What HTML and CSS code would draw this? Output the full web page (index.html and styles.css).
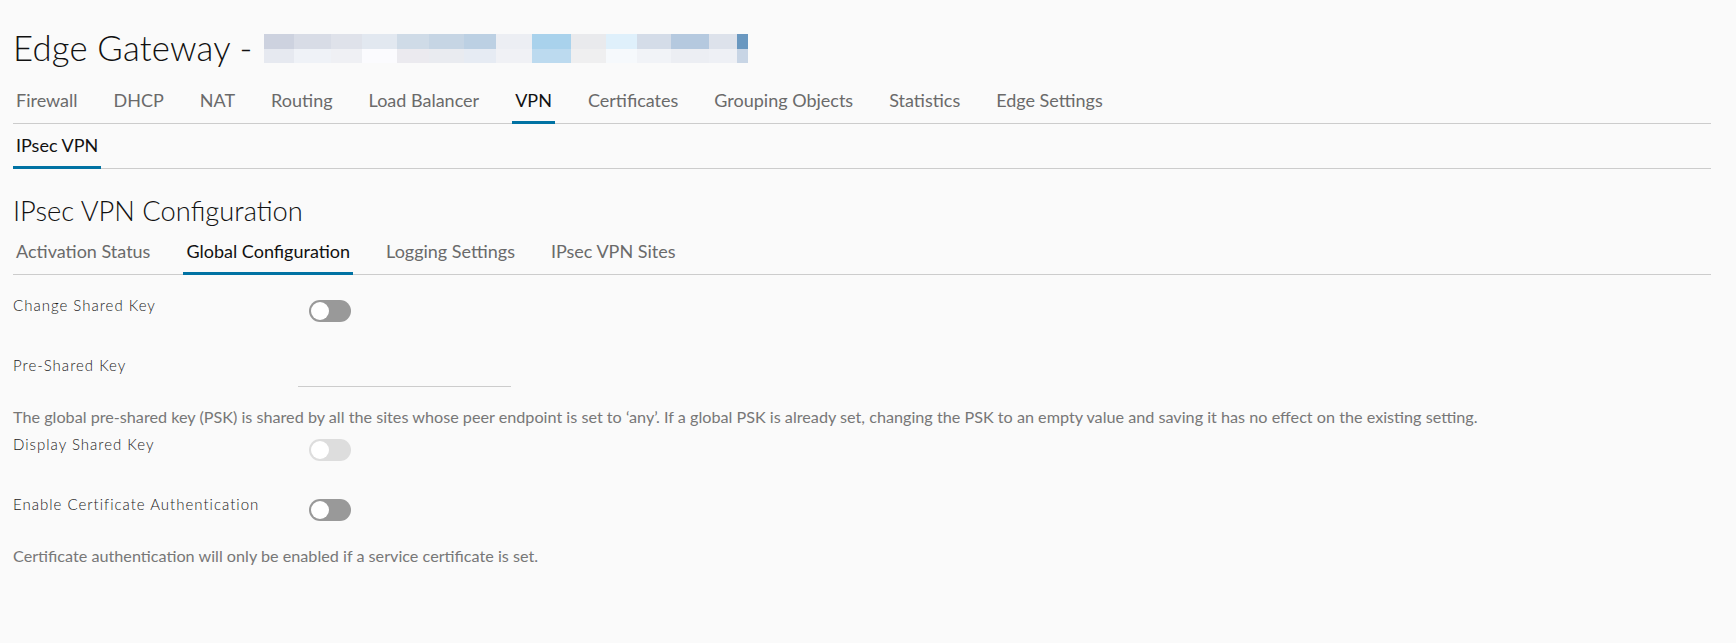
FILE: index.html
```html
<!DOCTYPE html>
<html lang="en">
<head>
<meta charset="utf-8">
<title>Edge Gateway</title>
<link rel="stylesheet" href="styles.css">
</head>
<body>
<div class="page">
  <div class="title-row">
    <h1 class="title">Edge Gateway -</h1>
    <div class="redacted">
      <div class="redacted-top"></div>
      <div class="redacted-bottom"></div>
    </div>
  </div>

  <nav class="tabs tabs-main">
    <a class="tab">Firewall</a>
    <a class="tab">DHCP</a>
    <a class="tab">NAT</a>
    <a class="tab">Routing</a>
    <a class="tab">Load Balancer</a>
    <a class="tab active">VPN</a>
    <a class="tab">Certificates</a>
    <a class="tab">Grouping Objects</a>
    <a class="tab">Statistics</a>
    <a class="tab">Edge Settings</a>
  </nav>

  <nav class="tabs tabs-sub">
    <a class="tab active">IPsec VPN</a>
  </nav>

  <h2 class="section-title">IPsec VPN Configuration</h2>

  <nav class="tabs tabs-config">
    <a class="tab">Activation Status</a>
    <a class="tab active">Global Configuration</a>
    <a class="tab">Logging Settings</a>
    <a class="tab">IPsec VPN Sites</a>
  </nav>

  <form class="form">
    <div class="form-row row-change">
      <label class="form-label">Change Shared Key</label>
      <div class="form-control"><span class="toggle"></span></div>
    </div>
    <div class="form-row row-psk">
      <label class="form-label">Pre-Shared Key</label>
      <div class="form-control"><span class="text-input"></span></div>
    </div>
    <p class="help help-psk">The global pre-shared key (PSK) is shared by all the sites whose peer endpoint is set to ‘any’. If a global PSK is already set, changing the PSK to an empty value and saving it has no effect on the existing setting.</p>
    <div class="form-row row-display">
      <label class="form-label">Display Shared Key</label>
      <div class="form-control"><span class="toggle disabled"></span></div>
    </div>
    <div class="form-row row-cert">
      <label class="form-label">Enable Certificate Authentication</label>
      <div class="form-control"><span class="toggle"></span></div>
    </div>
    <p class="help help-cert">Certificate authentication will only be enabled if a service certificate is set.</p>
  </form>
</div>
</body>
</html>
```

FILE: styles.css
```css
* { box-sizing: border-box; }

html, body {
  margin: 0;
  padding: 0;
  background: #fafafa;
}

body {
  font-family: "Lato", "Liberation Sans", sans-serif;
  color: #313131;
}

.page {
  padding: 28px 25px 0 13px;
}

.title-row {
  display: flex;
  align-items: center;
  height: 40px;
}

.title {
  margin: 0;
  font-size: 34.7px;
  font-weight: 300;
  color: #111111;
  line-height: 40px;
  letter-spacing: 0.2px;
}

.redacted {
  margin-left: 11px;
  width: 484px;
  display: flex;
  flex-direction: column;
}

.redacted-top {
  height: 15px;
  background: linear-gradient(to right,
    #cdd2df 0 30px, #d8dce6 30px 67px, #dfe2ea 67px 98px, #e2e8f0 98px 133px,
    #cfdbe7 133px 165px, #c6d5e4 165px 200px, #bcd0e3 200px 232px, #eceef3 232px 268px,
    #a9d2ec 268px 307px, #e9eaed 307px 342px, #dff0fb 342px 373px, #d4dce8 373px 407px,
    #b5c9df 407px 445px, #dde2eb 445px 473px, #6a98c0 473px 484px);
}

.redacted-bottom {
  height: 14px;
  background: linear-gradient(to right,
    #e6e9f0 0 30px, #eff2f7 30px 67px, #eff0f4 67px 98px, #fbfbfe 98px 133px,
    #ebeaef 133px 165px, #e9ebf0 165px 200px, #e6ebf3 200px 232px, #f0f1f5 232px 268px,
    #bcdaef 268px 307px, #efeff0 307px 342px, #f6f9fc 342px 373px, #f1f3f7 373px 407px,
    #eceef3 407px 445px, #eef0f5 445px 473px, #c8d5e5 473px 484px);
}

.tabs {
  display: flex;
  gap: 30px;
  border-bottom: 1px solid #cccccc;
}

.tab {
  display: block;
  padding: 0 3px 9px;
  line-height: 24px;
  font-size: 18px;
  font-weight: 400;
  color: #6a6a6a;
  text-decoration: none;
  margin-bottom: -1px;
  border-bottom: 3px solid transparent;
}

.tab.active {
  color: #111111;
  border-bottom-color: #0072a3;
}

.tabs-main {
  margin-top: 20px;
}

.tabs-sub {
  padding-top: 9px;
}

.section-title {
  margin: 24px 0 0;
  font-size: 27.3px;
  font-weight: 300;
  line-height: 36px;
  color: #111111;
}

.tabs-config {
  margin-top: 10px;
}

.form {
  display: flex;
  flex-direction: column;
  padding-top: 20px;
}

.form-row {
  display: flex;
  align-items: flex-start;
}

.form-label {
  width: 285px;
  flex: none;
  font-size: 15px;
  font-weight: 300;
  letter-spacing: 1px;
  line-height: 20px;
  color: #1a1a1a;
}

.form-control {
  display: flex;
}

.toggle {
  position: relative;
  display: block;
  width: 42px;
  height: 22px;
  margin: 5px 0 0 11px;
  border-radius: 11px;
  background: #999999;
}

.toggle::before {
  content: "";
  position: absolute;
  left: 2px;
  top: 2px;
  width: 18px;
  height: 18px;
  border-radius: 50%;
  background: #ffffff;
}

.toggle.disabled {
  background: #dddddd;
}

.row-psk {
  margin-top: 33px;
}

.text-input {
  display: block;
  width: 213px;
  height: 32px;
  border-bottom: 1px solid #cccccc;
}

.help {
  margin: 0;
  font-size: 16.2px;
  line-height: 20px;
  color: #777777;
}

.help-psk {
  margin-top: 20px;
}

.row-display {
  margin-top: 7px;
}

.row-cert {
  margin-top: 33px;
}

.help-cert {
  margin-top: 25px;
}
```
